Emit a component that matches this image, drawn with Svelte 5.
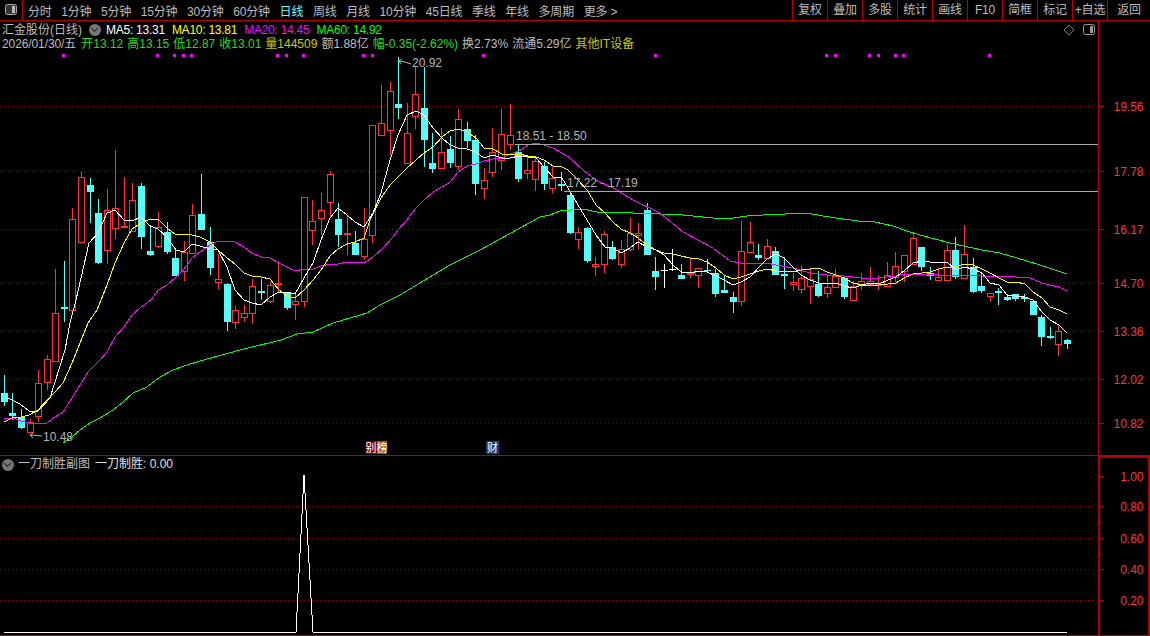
<script>
  const leftTabs = ['分时', '1分钟', '5分钟', '15分钟', '30分钟', '60分钟', '日线', '周线', '月线', '10分钟', '45日线', '季线', '年线', '多周期', '更多 >'];
  const rightTabs = ['复权', '叠加', '多股', '统计', '画线', 'F10', '简框', '标记', '+自选', '返回'];

  const mas = [
    { label: 'MA5: 13.31', color: '#ffffff' },
    { label: 'MA10: 13.81', color: '#ffff00' },
    { label: 'MA20: 14.45', color: '#ff00ff' },
    { label: 'MA60: 14.92', color: '#00ff00' }
  ];

  const quote = [
    { text: '开13.12', cls: 'green' },
    { text: '高13.15', cls: 'green' },
    { text: '低12.87', cls: 'green' },
    { text: '收13.01', cls: 'green' },
    { text: '量144509', cls: 'olive' },
    { text: '额1.88亿', cls: '' },
    { text: '幅-0.35(-2.62%)', cls: 'green' },
    { text: '换2.73%', cls: '' },
    { text: '流通5.29亿', cls: '' },
    { text: '其他IT设备', cls: 'olive' }
  ];

  // kind, body top, body bottom, high, low (all screen y)
  const candles = [
    ['d',393,402,375,406],['d',413,416,393,420],['d',417,428,409,429],['u',422,433,419,433],['u',383,417,370,422],
    ['u',359,383,355,390],['u',313,362,269,362],['d',307,309,261,322],['u',219,311,208,311],['u',177,243,172,243],
    ['d',185,192,178,223],['d',213,263,199,264],['u',210,251,189,264],['u',208,229,150,239],['u',226,228,177,228],
    ['u',200,232,183,232],['d',186,237,183,249],['d',251,255,225,256],['u',227,247,212,248],['d',232,252,222,254],
    ['d',258,276,250,276],['u',252,272,241,281],['u',215,254,204,254],['d',214,230,174,230],['d',242,268,227,275],
    ['u',279,283,254,289],['d',284,322,283,331],['u',310,323,306,329],['u',313,318,305,322],['u',286,314,279,324],
    ['d',291,293,279,300],['u',285,302,282,303],['u',283,285,261,292],['d',293,308,292,310],['u',301,305,293,320],
    ['u',197,302,197,307],['u',221,231,200,245],['u',210,219,193,235],['u',174,203,171,218],['d',219,235,203,247],
    ['u',233,235,215,255],['d',243,255,231,255],['u',239,257,208,260],['u',125,236,125,243],['u',123,136,85,136],
    ['u',91,131,82,155],['d',104,108,57,119],['u',133,164,103,164],['u',94,117,67,129],['d',108,140,67,167],
    ['d',163,169,133,173],['u',152,169,128,169],['d',149,163,136,168],['u',119,167,109,170],['d',129,141,122,148],
    ['d',140,184,135,195],['u',180,189,168,199],['u',152,173,128,177],['u',134,161,109,170],['u',135,145,104,150],
    ['d',152,179,145,182],['u',170,174,155,179],['u',161,180,156,191],['d',166,184,162,190],['u',178,189,167,193],
    ['d',184,186,172,191],['d',195,233,193,234],['u',232,240,227,249],['d',228,261,227,263],['u',264,267,257,276],
    ['u',234,265,231,273],['d',247,259,241,260],['u',249,265,240,268],['u',233,250,218,251],['u',233,236,223,249],
    ['d',210,255,203,255],['d',271,277,257,290],['f',270,271,264,288],['f',269,270,249,271],['d',275,279,264,279],
    ['u',273,275,258,278],['u',268,276,268,288],['d',270,271,259,272],['d',273,294,269,297],['d',290,293,275,293],
    ['d',297,302,292,313],['u',251,302,221,306],['u',242,253,222,253],['d',255,258,244,260],['u',246,259,239,259],
    ['d',251,275,247,275],['d',274,276,257,289],['u',282,285,273,291],['u',278,290,265,293],['u',279,287,268,304],
    ['d',284,296,271,297],['u',287,294,276,298],['u',276,288,269,288],['d',278,297,277,299],['u',286,301,281,301],
    ['u',281,286,273,290],['u',281,285,267,285],['u',284,286,275,290],['u',275,287,262,287],['u',266,278,252,282],
    ['u',255,272,255,282],['u',238,265,233,265],['d',247,267,247,271],['d',273,276,267,280],['u',277,281,268,281],
    ['u',250,281,245,281],['d',250,277,237,279],['u',254,279,225,279],['d',267,292,258,293],['d',286,291,273,293],
    ['u',293,297,293,302],['d',291,293,288,305],['d',297,300,294,301],['d',294,299,294,301],['d',297,299,294,302],
    ['d',301,315,301,315],['d',317,337,315,346],['d',336,338,327,339],['u',331,345,325,356],['d',340,344,339,349]
  ];
  const xOf = (i) => Math.floor(4.3 + i * 8.573);

  const ma5 = '5,397 12,400 20,404 29,411 38,411 50,398 65,350 70,323 76,300 89,243 98,233 107,213 115,210 124,220 132,221 141,217 150,226 158,229 167,237 176,250 184,252 192,244 200,246 210,249 218,250 227,267 235,290 244,300 252,303 261,305 270,297 279,292 287,292 295,294 304,278 313,263 321,240 330,218 338,208 347,215 355,222 364,227 373,213 381,193 390,160 398,135 407,115 416,111 424,115 433,128 442,138 450,145 458,148 467,149 476,152 484,158 493,155 502,158 510,158 519,156 528,157 536,158 544,167 553,177 562,178 571,193 578,205 587,220 596,235 605,247 613,248 621,253 630,248 638,242 647,247 656,250 664,255 673,265 681,272 690,273 699,271 707,272 716,276 724,280 733,285 741,282 750,277 759,267 767,259 776,254 784,258 793,267 801,275 810,280 819,283 827,284 836,283 844,286 853,288 862,285 870,283 879,284 888,280 896,277 904,271 913,263 922,261 930,262 939,263 947,262 956,270 964,267 973,269 982,273 990,283 999,285 1007,295 1016,296 1025,297 1033,300 1042,312 1050,320 1059,325 1067,333';
  const ma10 = '4,422 12,418 21,417 29,415 38,410 47,400 55,392 63,383 72,363 80,343 88,323 97,310 101,300 107,285 115,263 124,243 132,229 141,223 150,219 158,219 167,228 176,235 184,234 192,235 200,237 210,242 218,250 227,258 235,264 244,273 252,276 261,277 270,279 279,290 287,296 295,298 304,290 313,280 321,270 330,256 338,249 347,244 355,242 364,238 370,220 381,198 390,185 398,177 407,168 416,160 424,153 433,147 442,137 450,131 458,129 467,132 476,138 484,148 493,149 502,154 510,155 519,154 528,156 536,157 544,160 553,166 562,167 568,170 578,180 587,190 596,205 605,213 613,222 621,229 630,233 638,238 647,245 656,250 664,253 673,254 681,256 690,258 699,259 707,262 716,268 724,275 733,279 741,277 750,274 759,271 767,269 776,271 784,271 793,272 801,270 810,269 819,268 827,272 836,275 844,278 853,283 862,285 870,285 879,285 888,284 896,283 904,278 913,274 922,273 930,272 939,269 947,267 956,267 964,264 973,265 982,269 990,273 999,278 1007,282 1016,282 1025,284 1033,292 1042,298 1050,307 1059,310 1067,314';
  const ma20 = '4,418 13,418 21,421 29,423 38,424 47,423 55,417 63,412 72,398 80,385 88,372 100,360 107,352 115,337 124,327 132,315 141,307 151,300 158,290 167,285 176,277 184,269 192,258 200,252 210,245 218,241 227,241 235,242 244,247 252,253 261,257 270,258 279,263 287,267 295,271 304,269 313,269 321,266 330,264 338,264 347,262 355,262 364,263 373,257 383,248 393,237 398,230 407,220 416,208 424,200 433,192 442,187 450,182 458,172 467,166 476,164 484,161 493,159 502,158 510,154 519,151 528,145 536,143 544,145 553,148 562,153 570,158 583,170 596,180 617,190 633,200 660,213 683,232 713,248 730,261 741,263 750,264 767,263 776,265 793,268 810,273 827,275 844,276 862,278 879,278 896,276 904,274 922,274 939,275 964,275 982,276 999,276 1016,277 1028,277 1042,283 1050,285 1059,287 1067,291';
  const ma60 = '63,443 72,437 80,430 90,423 100,418 113,410 123,402 133,393 147,387 160,377 173,370 187,365 200,361 240,350 281,340 297,334 313,332 333,323 350,318 367,313 380,305 400,295 420,283 450,265 480,250 520,228 540,217 550,215 560,211 583,209 597,212 617,212 633,213 660,214 683,215 713,218 733,218 747,216 763,215 807,213 823,216 843,219 858,221 875,222 893,226 907,231 920,235 950,243 982,250 1000,253 1017,258 1040,265 1067,274';
  const lines = [
    { pts: ma60, color: '#00ff00' },
    { pts: ma20, color: '#ff00ff' },
    { pts: ma10, color: '#ffff00' },
    { pts: ma5, color: '#ffffff' }
  ];

  const marks = [63, 157, 174, 183, 191, 277, 286, 303, 363, 372, 483, 655, 826, 835, 869, 878, 895, 903, 989];
  const grid = [
    { y: 106, label: '19.56' },
    { y: 171, label: '17.78' },
    { y: 229, label: '16.17' },
    { y: 283, label: '14.70' },
    { y: 331, label: '13.36' },
    { y: 379, label: '12.02' },
    { y: 423, label: '10.82' }
  ];

  const subTicks = [
    { y: 476, label: '1.00' },
    { y: 506, label: '0.80' },
    { y: 538, label: '0.60' },
    { y: 569, label: '0.40' },
    { y: 600, label: '0.20' }
  ];
  const subMinor = [491, 522, 554, 585];
</script>

<div class="screen">
  <div class="toolbar">
    <div class="panel-btn">
      <svg width="12" height="12" viewBox="0 0 12 12">
        <rect x="0.5" y="0.5" width="11" height="10" rx="2" fill="#333" stroke="#aaa" />
        <rect x="7" y="2" width="3" height="7" fill="#bbb" />
      </svg>
    </div>
    <div class="tabs">
      {#each leftTabs as tab}
        <span class:active={tab === '日线'}>{tab}</span>
      {/each}
    </div>
    <div class="actions">
      {#each rightTabs as tab}
        <span>{tab}</span>
      {/each}
    </div>
  </div>

  <div class="main-pane">
    <div class="info">
      <div class="info-row">
        <span class="name">汇金股份(日线)</span>
        <span class="round"></span>
        {#each mas as ma}
          <span class="ma" style="color: {ma.color}">{ma.label}</span>
        {/each}
        <span class="row-icons">
          <svg width="32" height="12" viewBox="0 0 32 12">
            <path d="M6 1 L11 6 L6 11 L1 6 Z" fill="none" stroke="#777" />
            <rect x="20.5" y="0.5" width="11" height="10" rx="2" fill="none" stroke="#999" />
            <rect x="27" y="2" width="3" height="7" fill="#999" />
          </svg>
        </span>
      </div>
      <div class="info-row quote">
        <span>2026/01/30/五</span>
        {#each quote as q}
          <span class={q.cls}>{q.text}</span>
        {/each}
      </div>
    </div>

    <svg class="chart" width="1150" height="405" viewBox="0 50 1150 405">
      {#each grid as g}
        <line class="dots" x1="0" x2="1096" y1={g.y + 0.5} y2={g.y + 0.5} />
        <line class="axis" x1="1098" x2="1104" y1={g.y + 0.5} y2={g.y + 0.5} />
        <text class="price" x="1143.5" y={g.y + 4.5}>{g.label}</text>
      {/each}
      <line class="axis" x1="1098.5" x2="1098.5" y1="50" y2="455" />

      {#each marks as m}
        <rect x={m - 1} y="54" width="3" height="3" fill="#ff00ff" />
      {/each}

      {#each candles as [kind, top, bottom, high, low], i}
        {@const x = xOf(i)}
        <rect class="crisp {kind}" x={x} y={high} width="1" height={low - high} />
        {#if kind === 'u'}
          <rect class="crisp hollow" x={x - 2.5} y={top + 0.5} width="6" height={Math.max(bottom - top - 1, 1)} />
        {:else}
          <rect class="crisp {kind}" x={x - 3} y={top} width="7" height={bottom - top} />
        {/if}
      {/each}

      {#each lines as l}
        <polyline class="ma-line" points={l.pts} stroke={l.color} />
      {/each}

      <line class="level" x1="515" x2="1098" y1="144.5" y2="144.5" />
      <line class="level" x1="564" x2="1098" y1="191.5" y2="191.5" />
      <text class="note" x="516" y="140">18.51 - 18.50</text>
      <text class="note" x="567" y="187">17.22 - 17.19</text>

      <path class="arrow" d="M411 64 L405 62 L399 61 M399 61 L402 59 M399 61 L401 64" />
      <text class="note" x="412" y="67">20.92</text>
      <path class="arrow" d="M42 436 L30 435 M30 435 L33 433 M30 435 L33 438" />
      <text class="note" x="43" y="441">10.48</text>

      <rect x="366" y="441" width="11" height="13" fill="#8a0000" />
      <rect x="377" y="441" width="10" height="13" fill="#a55a00" />
      <text class="badge" x="376.5" y="452">别榜</text>
      <rect x="486" y="441" width="13" height="13" fill="#0a3f86" />
      <text class="badge" x="492.5" y="452">财</text>
    </svg>
  </div>

  <div class="sub-pane">
    <div class="sub-plot">
      <div class="info-row sub-head">
        <span class="round"></span>
        <span class="name">一刀制胜副图</span>
        <span class="sub-value">一刀制胜: 0.00</span>
      </div>
      <svg class="chart" width="1098" height="161" viewBox="0 473 1098 161">
        {#each subTicks.slice(1) as t}
          <line class="dots" x1="0" x2="1096" y1={t.y + 0.5} y2={t.y + 0.5} />
        {/each}
        <polyline class="spike" points="4,632 296,632 304,475 313,632 1067,632" />
      </svg>
    </div>
    <svg class="sub-axis" width="48" height="177" viewBox="1100 458 48 177">
      {#each subTicks as t}
        <line class="axis" x1="1100" x2="1104" y1={t.y + 0.5} y2={t.y + 0.5} />
        <text class="price" x="1143.5" y={t.y + 4.5}>{t.label}</text>
      {/each}
      {#each subMinor as y}
        <line class="axis" x1="1100" x2="1101" y1={y + 0.5} y2={y + 0.5} />
      {/each}
    </svg>
  </div>
</div>

<style>
  :global(body) {
    margin: 0;
    background: #000;
  }

  .screen {
    width: 1150px;
    height: 636px;
    display: flex;
    flex-direction: column;
    overflow: hidden;
    background: #000;
    color: #bdbdbd;
    font: 12px "Liberation Sans", "Noto Sans CJK SC", sans-serif;
  }

  .toolbar {
    height: 20px;
    display: flex;
    align-items: center;
    border-bottom: 1px solid #b40000;
    flex: none;
    letter-spacing: -0.2px;
  }

  .panel-btn {
    width: 23px;
    height: 20px;
    box-sizing: border-box;
    padding-left: 5px;
    display: flex;
    align-items: center;
    border-right: 1px solid #b40000;
    flex: none;
  }

  .tabs {
    display: flex;
    gap: 9.7px;
    padding-left: 5px;
    flex: 1;
  }

  .active {
    color: #6ff;
  }

  .actions {
    display: flex;
  }

  .actions span {
    width: 35px;
    height: 20px;
    line-height: 20px;
    box-sizing: border-box;
    border-left: 1px solid #b40000;
    text-align: center;
  }

  .actions span:last-child {
    width: 43px;
  }

  .main-pane {
    height: 434px;
    flex: none;
  }

  .info {
    width: 1099px;
    height: 29px;
    box-sizing: border-box;
    border-right: 1px solid #b40000;
    padding: 2px 0 0 2px;
  }

  .info-row {
    height: 14px;
    line-height: 14px;
    display: flex;
    align-items: center;
    white-space: nowrap;
  }

  .round {
    width: 12px;
    height: 12px;
    border-radius: 50%;
    background: #777;
    margin: 0 5px 0 7px;
    position: relative;
    flex: none;
  }

  .round::after {
    content: "";
    position: absolute;
    left: 3px;
    top: 2px;
    width: 4px;
    height: 4px;
    border-right: 1px solid #222;
    border-bottom: 1px solid #222;
    transform: rotate(45deg);
  }

  .ma {
    margin-right: 7px;
    letter-spacing: -0.25px;
  }

  .row-icons {
    margin-left: auto;
    margin-right: 3px;
    display: flex;
  }

  .quote {
    gap: 4px;
  }

  .quote span:first-child {
    margin-right: 1px;
    letter-spacing: -0.1px;
  }

  .green {
    color: #20dc20;
  }

  .olive {
    color: #c8c800;
  }

  .chart {
    display: block;
  }

  .chart text,
  .sub-axis text {
    font-family: "Liberation Sans", "Noto Sans CJK SC", sans-serif;
  }

  .dots {
    stroke: #8c0000;
    stroke-dasharray: 1 3;
    shape-rendering: crispEdges;
  }

  .axis {
    stroke: #b40000;
    shape-rendering: crispEdges;
  }

  .price {
    fill: #ff3232;
    font-size: 12px;
    text-anchor: end;
  }

  .crisp {
    shape-rendering: crispEdges;
  }

  .u {
    fill: #ff3232;
  }

  .d {
    fill: #54fcfc;
  }

  .f {
    fill: #fff;
  }

  .hollow {
    fill: #000;
    stroke: #ff3232;
  }

  .ma-line {
    fill: none;
    stroke-width: 1;
    shape-rendering: crispEdges;
  }

  .level {
    stroke: #a8a8a8;
    shape-rendering: crispEdges;
  }

  .note {
    fill: #b4b4b4;
    font-size: 12px;
  }

  .arrow {
    fill: none;
    stroke: #b4b4b4;
  }

  .badge {
    fill: #fff;
    font-size: 11px;
    text-anchor: middle;
  }

  .sub-pane {
    height: 181px;
    flex: none;
    display: flex;
    border-top: 1px solid #b40000;
    box-sizing: border-box;
    border-bottom: 1px solid #b40000;
  }

  .sub-plot {
    width: 1098px;
    flex: none;
  }

  .sub-head {
    height: 17px;
    line-height: 17px;
  }

  .sub-head .round {
    margin: 0 4px 0 2px;
  }

  .sub-value {
    margin-left: 5px;
    color: #e0e0e0;
  }

  .spike {
    fill: none;
    stroke: #fff;
    shape-rendering: crispEdges;
  }

  .sub-axis {
    display: block;
    flex: none;
    border: 2px solid #b40000;
    border-bottom: 0;
    width: 48px;
    height: 177px;
  }
</style>
